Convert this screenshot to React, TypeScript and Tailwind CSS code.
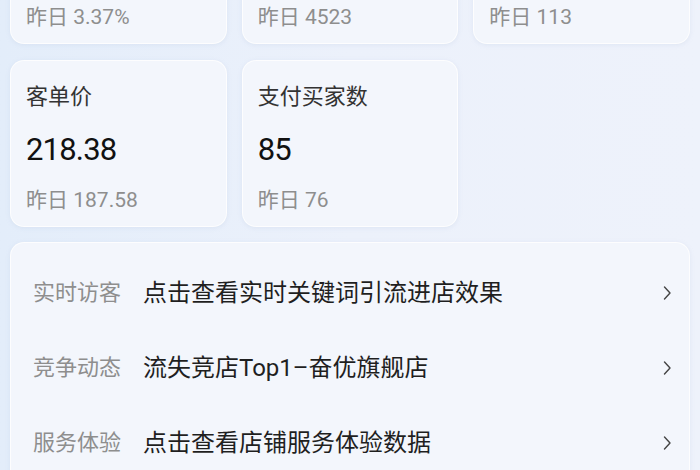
import React from 'react';

const font = { fontFamily: "Roboto, 'Noto Sans CJK SC', sans-serif" };

interface Metric {
  label: string;
  value: string;
  yesterday: string;
}

// top row is scrolled off the screen, only the "昨日" line shows
const topRow = ['3.37%', '4523', '113'];

const secondRow: Metric[] = [
  { label: '客单价', value: '218.38', yesterday: '187.58' },
  { label: '支付买家数', value: '85', yesterday: '76' },
];

const links = [
  { label: '实时访客', text: '点击查看实时关键词引流进店效果' },
  { label: '竞争动态', text: '流失竞店Top1–奋优旗舰店' },
  { label: '服务体验', text: '点击查看店铺服务体验数据' },
];

const cardCls =
  'bg-[#f3f6fc] rounded-[14px] border border-white/80 shadow-[0_1px_4px_rgba(180,195,225,0.25)]';

function Yesterday({ v }: { v: string }) {
  return (
    <div className="text-[21px] leading-[30px] text-[#8e8e8e]">
      昨日 {v}
    </div>
  );
}

function MetricCard({ m }: { m: Metric }) {
  return (
    <div className={`${cardCls} pt-[21px] pb-[11px] px-[15px]`}>
      <div className="text-[22px] leading-[30px] text-[#333]">{m.label}</div>
      <div className="mt-[18px] text-[31px] leading-[40px] tracking-[-0.8px] text-[#111]">{m.value}</div>
      <div className="mt-[15px]">
        <Yesterday v={m.yesterday} />
      </div>
    </div>
  );
}

function Chevron() {
  return (
    <svg width="10" height="16" viewBox="0 0 10 16" fill="none">
      <path d="M2.5 2l5.5 6-5.5 6" stroke="#444" strokeWidth="1.4" strokeLinecap="round" strokeLinejoin="round" />
    </svg>
  );
}

export default function App() {
  return (
    <div
      className="w-[700px] h-[470px] overflow-hidden bg-gradient-to-r from-[#e3edfa] via-[#ecf1fb] to-[#eef2fb]"
      style={font}
    >
      <div className="-mt-[123px] px-[10px] flex flex-col gap-[16px]">
        <div className="grid grid-cols-3 gap-[15px]">
          {topRow.map(v => (
            <div key={v} className={`${cardCls} pt-[124px] pb-[11px] px-[15px]`}>
              <Yesterday v={v} />
            </div>
          ))}
        </div>
        <div className="grid grid-cols-3 gap-[15px]">
          {secondRow.map(m => (
            <MetricCard key={m.label} m={m} />
          ))}
        </div>
        <div className={`${cardCls} -mt-px pt-[12px] pb-[20px] pl-[22px] pr-[17px]`}>
          {links.map(l => (
            <div key={l.label} className="h-[75px] flex items-center">
              <span className="w-[88px] text-[22px] text-[#8e8e8e]">{l.label}</span>
              <span className="ml-[22px] flex-1 text-[24px] text-[#1f1f1f]">{l.text}</span>
              <Chevron />
            </div>
          ))}
        </div>
      </div>
    </div>
  );
}
